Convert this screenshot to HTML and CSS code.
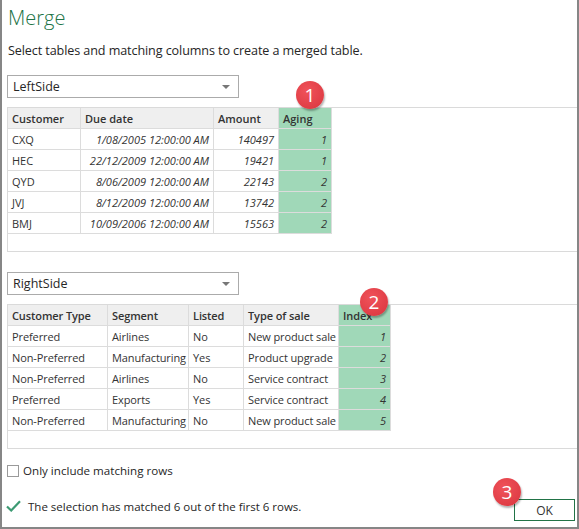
FILE: index.html
```html
<!DOCTYPE html>
<html lang="en">

<head>
    <meta charset="UTF-8">
    <title>Merge</title>
    <link rel="stylesheet" href="styles.css">
</head>

<body>
<div class="dialog">
    <h1 class="title">Merge</h1>
    <p class="intro">Select tables and matching columns to create a merged table.</p>

    <div class="combo">
        <span>LeftSide</span>
        <i class="caret"></i>
    </div>
    <div class="panel">
        <table class="grid left">
            <thead>
            <tr>
                <th class="c1">Customer</th>
                <th class="c2">Due date</th>
                <th class="c3">Amount</th>
                <th class="c4 picked">Aging</th>
            </tr>
            </thead>
            <tbody>
            <tr><td>CXQ</td><td class="num">1/08/2005 12:00:00 AM</td><td class="num">140497</td><td class="num picked">1</td></tr>
            <tr><td>HEC</td><td class="num">22/12/2009 12:00:00 AM</td><td class="num">19421</td><td class="num picked">1</td></tr>
            <tr><td>QYD</td><td class="num">8/06/2009 12:00:00 AM</td><td class="num">22143</td><td class="num picked">2</td></tr>
            <tr><td>JVJ</td><td class="num">8/12/2009 12:00:00 AM</td><td class="num">13742</td><td class="num picked">2</td></tr>
            <tr><td>BMJ</td><td class="num">10/09/2006 12:00:00 AM</td><td class="num">15563</td><td class="num picked">2</td></tr>
            </tbody>
        </table>
    </div>

    <div class="combo second">
        <span>RightSide</span>
        <i class="caret"></i>
    </div>
    <div class="panel">
        <table class="grid right">
            <thead>
            <tr>
                <th class="c1">Customer Type</th>
                <th class="c2">Segment</th>
                <th class="c3">Listed</th>
                <th class="c4">Type of sale</th>
                <th class="c5 picked">Index</th>
            </tr>
            </thead>
            <tbody>
            <tr><td>Preferred</td><td>Airlines</td><td>No</td><td>New product sale</td><td class="num picked">1</td></tr>
            <tr><td>Non-Preferred</td><td>Manufacturing</td><td>Yes</td><td>Product upgrade</td><td class="num picked">2</td></tr>
            <tr><td>Non-Preferred</td><td>Airlines</td><td>No</td><td>Service contract</td><td class="num picked">3</td></tr>
            <tr><td>Preferred</td><td>Exports</td><td>Yes</td><td>Service contract</td><td class="num picked">4</td></tr>
            <tr><td>Non-Preferred</td><td>Manufacturing</td><td>No</td><td>New product sale</td><td class="num picked">5</td></tr>
            </tbody>
        </table>
    </div>

    <label class="check">
        <span class="box"></span>
        Only include matching rows
    </label>

    <div class="footer">
        <div class="status">
            <svg class="tick" width="15" height="12" viewBox="0 0 15 12">
                <path d="M1 6.5 L5.2 10.5 L14 1.2" fill="none" stroke="#3c9a73" stroke-width="2.2"/>
            </svg>
            The selection has matched 6 out of the first 6 rows.
        </div>
        <button class="ok">OK</button>
    </div>

    <!-- numbered callouts -->
    <span class="badge b1">1</span>
    <span class="badge b2">2</span>
    <span class="badge b3">3</span>
</div>
</body>

</html>
```

FILE: styles.css
```css
* {
    margin: 0;
    padding: 0;
    box-sizing: border-box;
}

body {
    background: #fff;
    font-family: "Open Sans", "Noto Sans", sans-serif;
    color: #333;
}

.dialog {
    position: relative;
    width: 579px;
    height: 529px;
    padding: 0 0 0 5px;
    border: 2px solid #868686;
    border-top: none;
}

.title {
    padding-top: 5px;
    padding-left: 1px;
    font-size: 20px;
    font-weight: 300;
    line-height: 26px;
    color: #217346;
}

.intro {
    margin-top: 11px;
    padding-left: 1px;
    font-size: 12.6px;
    letter-spacing: -0.1px;
    line-height: 18px;
    color: #262626;
}

.combo {
    display: flex;
    align-items: center;
    justify-content: space-between;
    width: 232px;
    height: 23px;
    margin-top: 15px;
    padding: 0 8px 0 5px;
    border: 1px solid #ababab;
    font-size: 12.5px;
    color: #262626;
}

.combo.second {
    margin-top: 20px;
}

.caret {
    width: 0;
    height: 0;
    border-left: 4px solid transparent;
    border-right: 4px solid transparent;
    border-top: 4px solid #777;
}

.panel {
    height: 145px;
    margin-top: 9px;
    border: 1px solid #dadada;
    border-right: none;
}

.grid {
    border-collapse: separate;
    border-spacing: 0;
    table-layout: fixed;
    font-size: 11px;
}

.grid.left {
    width: 324px;
}

.grid.right {
    width: 383px;
    letter-spacing: -0.1px;
}

.grid th,
.grid td {
    height: 21px;
    padding: 0 3px 0 4px;
    border-right: 1px solid #dcdcdc;
    border-bottom: 1px solid #dcdcdc;
    text-align: left;
    white-space: nowrap;
    overflow: hidden;
}

.grid th {
    background: #efefef;
    font-weight: 600;
    color: #333;
}

.grid td {
    color: #333;
}

.grid td.num {
    text-align: right;
    font-style: italic;
    padding-right: 4px;
}

.grid .picked {
    background: #a0d8b8;
}

.left .c1 { width: 73px; }
.left .c2 { width: 133px; }
.left .c3 { width: 65px; }
.left .c4 { width: 53px; }

.right .c1 { width: 100px; }
.right .c2 { width: 81px; }
.right .c3 { width: 55px; }
.right .c4 { width: 95px; }
.right .c5 { width: 52px; }

.check {
    display: flex;
    align-items: center;
    gap: 4px;
    margin-top: 14px;
    font-size: 11.6px;
    color: #262626;
}

.check .box {
    width: 12px;
    height: 12px;
    border: 1px solid #9a9a9a;
}

.footer {
    display: flex;
    justify-content: space-between;
    align-items: flex-start;
    margin-top: 21px;
    padding-right: 2px;
}

.status {
    display: flex;
    align-items: center;
    gap: 7px;
    height: 14px;
    margin-top: 0;
    font-size: 11.5px;
    color: #262626;
}

.tick {
    margin-left: -1px;
}

.ok {
    width: 61px;
    height: 22px;
    border: 1px solid #217346;
    background: #fff;
    font-family: "Open Sans", sans-serif;
    font-size: 12px;
    color: #333;
}

.badge {
    position: absolute;
    width: 28px;
    height: 28px;
    border-radius: 50%;
    background: radial-gradient(circle at 40% 35%, #f0525a, #d9353d);
    box-shadow: 1px 2px 2px rgba(0, 0, 0, 0.3);
    color: #fff;
    font-size: 19px;
    line-height: 28px;
    text-align: center;
}

.b1 { left: 294px; top: 81px; }
.b2 { left: 358px; top: 288px; }
.b3 { left: 491px; top: 478px; }
```
